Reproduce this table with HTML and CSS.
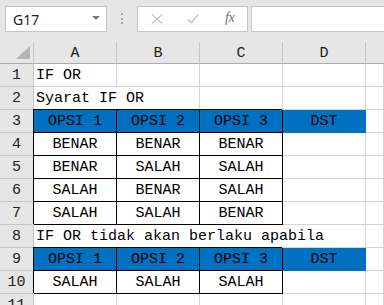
FILE: index.html
```html
<!DOCTYPE html>
<html>
<head>
<meta charset="utf-8">
<link rel="stylesheet" href="styles.css">
</head>
<body>
<div class="toolbar">
  <div class="namebox"><span class="name">G17</span><span class="caret"></span></div>
  <div class="dots"><i></i><i></i><i></i></div>
  <div class="fxbox">
    <svg class="ico x" width="12" height="10" viewBox="0 0 12 10"><path d="M1 0.5 L11 9.5 M11 0.5 L1 9.5" stroke="#c4c4c4" stroke-width="1.3" fill="none"/></svg>
    <svg class="ico chk" width="12" height="10" viewBox="0 0 12 10"><path d="M0.8 5.2 L4.2 8.8 L11.2 0.8" stroke="#c4c4c4" stroke-width="1.4" fill="none"/></svg>
    <span class="fx">fx</span>
  </div>
  <div class="formula"></div>
</div>
<div class="sheet">
  <div class="corner"><span class="tri"></span></div>
  <div class="ch">A</div><div class="ch">B</div><div class="ch">C</div><div class="ch">D</div><div class="ch last"></div>

  <div class="rh">1</div>
  <div class="c left">IF OR</div><div class="c"></div><div class="c"></div><div class="c"></div><div class="c"></div>

  <div class="rh">2</div>
  <div class="c left span2">Syarat IF OR</div><div class="c"></div><div class="c"></div><div class="c"></div>

  <div class="rh">3</div>
  <div class="c bx blue">OPSI 1</div><div class="c bx blue">OPSI 2</div><div class="c bx blue">OPSI 3</div><div class="c blue fill">DST</div><div class="c"></div>

  <div class="rh">4</div>
  <div class="c bx">BENAR</div><div class="c bx">BENAR</div><div class="c bx">BENAR</div><div class="c"></div><div class="c"></div>

  <div class="rh">5</div>
  <div class="c bx">BENAR</div><div class="c bx">SALAH</div><div class="c bx">SALAH</div><div class="c"></div><div class="c"></div>

  <div class="rh">6</div>
  <div class="c bx">SALAH</div><div class="c bx">BENAR</div><div class="c bx">SALAH</div><div class="c"></div><div class="c"></div>

  <div class="rh">7</div>
  <div class="c bx">SALAH</div><div class="c bx">SALAH</div><div class="c bx">BENAR</div><div class="c"></div><div class="c"></div>

  <div class="rh">8</div>
  <div class="c left span4">IF OR tidak akan berlaku apabila</div><div class="c"></div>

  <div class="rh">9</div>
  <div class="c bx blue">OPSI 1</div><div class="c bx blue">OPSI 2</div><div class="c bx blue">OPSI 3</div><div class="c blue fill">DST</div><div class="c"></div>

  <div class="rh">10</div>
  <div class="c bx">SALAH</div><div class="c bx">SALAH</div><div class="c bx">SALAH</div><div class="c"></div><div class="c"></div>

  <div class="rh">11</div>
  <div class="c"></div><div class="c"></div><div class="c"></div><div class="c"></div><div class="c"></div>
</div>
</body>
</html>
```

FILE: styles.css
```css
* { box-sizing: border-box; }
html, body { margin: 0; padding: 0; }
body {
  width: 384px;
  height: 305px;
  overflow: hidden;
  background: #ffffff;
  font-family: "Liberation Mono", "DejaVu Sans Mono", monospace;
}
.toolbar {
  height: 42px;
  background: #e6e6e6;
  display: flex;
  align-items: flex-start;
  padding-top: 6px;
  padding-left: 5px;
}
.namebox {
  width: 102px;
  height: 26px;
  background: #fff;
  border: 1px solid #c6c6c6;
  display: flex;
  align-items: center;
  justify-content: space-between;
  padding: 0 6px 0 7px;
}
.name {
  font-family: "Noto Sans", "Open Sans", sans-serif;
  font-size: 14px;
  color: #222;
}
.caret {
  width: 0; height: 0;
  border-left: 4px solid transparent;
  border-right: 4px solid transparent;
  border-top: 4px solid #7a7a7a;
  margin-top: -2px;
}
.dots {
  width: 2px;
  margin-left: 14px;
  margin-top: 7px;
  display: flex;
  flex-direction: column;
  gap: 2.5px;
}
.dots i {
  display: block;
  width: 2px; height: 2px;
  background: #a8a8a8;
}
.fxbox {
  width: 111px;
  height: 26px;
  margin-left: 14px;
  background: #fff;
  border: 1px solid #c6c6c6;
  display: flex;
  align-items: center;
  padding-left: 13px;
}
.ico { display: block; }
.chk { margin-left: 24px; }
.fx {
  margin-left: 26px;
  font-family: "Liberation Serif", serif;
  font-style: italic;
  font-size: 14px;
  color: #707070;
  letter-spacing: -0.5px;
  margin-top: -2px;
}
.formula {
  flex: 1;
  height: 26px;
  margin-left: 3px;
  background: #fff;
  border: 1px solid #c6c6c6;
  border-right: none;
}
.sheet {
  display: grid;
  grid-template-columns: 34px 83px 83px 83px 83px 1fr;
  grid-template-rows: 22px repeat(11, 23px);
  font-size: 15px;
  color: #000;
}
.corner {
  background: #e6e6e6;
  border-right: 1px solid #c6c6c6;
  border-bottom: 1px solid #ababab;
  position: relative;
}
.tri {
  position: absolute;
  right: 3px;
  bottom: 4px;
  width: 0; height: 0;
  border-left: 14px solid transparent;
  border-bottom: 13px solid #b4b4b4;
}
.ch {
  background: #e6e6e6;
  border-right: 1px solid #c6c6c6;
  border-bottom: 1px solid #ababab;
  text-align: center;
  line-height: 21px;
  padding-top: 1px;
  color: #222;
}
.ch.last { border-right: none; }
.rh {
  background: #e6e6e6;
  border-right: 1px solid #c6c6c6;
  border-bottom: 1px solid #c6c6c6;
  text-align: center;
  line-height: 20px;
  padding-top: 2px;
  color: #222;
}
.c {
  background: #fff;
  border-right: 1px solid #d4d4d4;
  border-bottom: 1px solid #d4d4d4;
  text-align: center;
  line-height: 20px;
  padding-top: 2px;
  white-space: nowrap;
  overflow: visible;
}
.c.left { text-align: left; padding-left: 2px; }
.span2 { grid-column: span 2; }
.span4 { grid-column: span 4; }
.bx {
  border-right-color: #000;
  border-bottom-color: #000;
  box-shadow: -1px -1px 0 0 #000;
}
.blue { background: #0070c0; }
.blue.fill { border-right-color: #0070c0; border-bottom-color: #0070c0; }
```
